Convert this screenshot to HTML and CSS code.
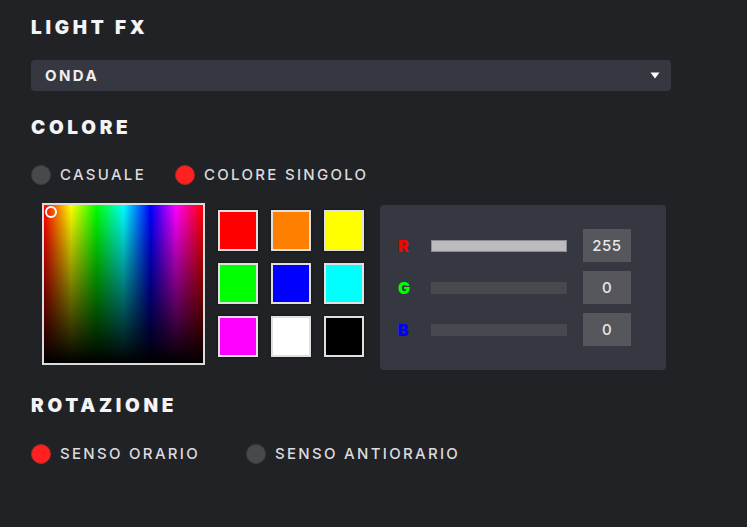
FILE: index.html
```html
<!DOCTYPE html>
<html lang="it">
<head>
<meta charset="utf-8">
<link rel="stylesheet" href="styles.css">
</head>
<body>
<div class="panel">
  <h2 class="title t1">LIGHT FX</h2>
  <div class="select">
    <span>ONDA</span>
    <svg class="caret" width="10" height="7" viewBox="0 0 10 7"><path d="M0.5 0.5 H9.5 L5 6.5 Z" fill="#fff"/></svg>
  </div>

  <h2 class="title t2">COLORE</h2>
  <div class="radios r1">
    <label class="radio"><span class="dot"></span>CASUALE</label>
    <label class="radio"><span class="dot on"></span>COLORE SINGOLO</label>
  </div>

  <div class="picker-row">
    <div class="spectrum">
      <div class="shade"></div>
      <span class="marker"></span>
    </div>
    <div class="swatches">
      <span class="sw" style="background:#ff0000"></span>
      <span class="sw" style="background:#ff8000"></span>
      <span class="sw" style="background:#ffff00"></span>
      <span class="sw" style="background:#00ff00"></span>
      <span class="sw" style="background:#0000ff"></span>
      <span class="sw" style="background:#00ffff"></span>
      <span class="sw" style="background:#ff00ff"></span>
      <span class="sw" style="background:#ffffff"></span>
      <span class="sw" style="background:#000000"></span>
    </div>
    <div class="rgb">
      <div class="rgb-row">
        <span class="ch red">R</span>
        <span class="track full"></span>
        <span class="val">255</span>
      </div>
      <div class="rgb-row">
        <span class="ch green">G</span>
        <span class="track"></span>
        <span class="val">0</span>
      </div>
      <div class="rgb-row">
        <span class="ch blue">B</span>
        <span class="track"></span>
        <span class="val">0</span>
      </div>
    </div>
  </div>

  <h2 class="title t3">ROTAZIONE</h2>
  <div class="radios r2">
    <label class="radio"><span class="dot on"></span>SENSO ORARIO</label>
    <label class="radio"><span class="dot"></span>SENSO ANTIORARIO</label>
  </div>
</div>
</body>
</html>
```

FILE: styles.css
```css
html, body {
  margin: 0;
  padding: 0;
  background: #212226;
  width: 747px;
  height: 527px;
  overflow: hidden;
}
.panel {
  padding: 16px 0 0 31px;
  font-family: Inter, "Open Sans", sans-serif;
  color: #e4e4e6;
}
.title {
  margin: 0;
  font-family: Inter, "DejaVu Sans", sans-serif;
  font-weight: 900;
  font-size: 19px;
  letter-spacing: 3.7px;
  color: #f4f4f5;
  line-height: 23px;
}
.select {
  margin-top: 21px;
  width: 640px;
  height: 31px;
  box-sizing: border-box;
  background: #353841;
  border-radius: 4px;
  display: flex;
  align-items: center;
  justify-content: space-between;
  padding: 0 11px 0 14px;
  font-family: Inter, sans-serif;
  font-weight: 700;
  font-size: 15px;
  letter-spacing: 2.4px;
  color: #f0f0f0;
}
.caret { display: block; }
.t2 { margin-top: 25px; }
.radios {
  display: flex;
  align-items: center;
  gap: 29px;
  margin-top: 26px;
}
.radio {
  display: flex;
  align-items: center;
  gap: 9px;
  font-family: Inter, sans-serif;
  font-weight: 500;
  font-size: 15px;
  letter-spacing: 2.3px;
  color: #dcdcde;
  line-height: 20px;
}
.dot {
  width: 20px;
  height: 20px;
  box-sizing: border-box;
  border-radius: 50%;
  background: #48494d;
  border: 1px solid #3c3d41;
}
.dot.on {
  background: #ff2020;
  border-color: #a52a2a;
}
.r2 { gap: 46px; margin-top: 27px; }
.picker-row {
  display: flex;
  align-items: flex-start;
  margin-top: 18px;
  margin-left: 11px;
}
.spectrum {
  position: relative;
  width: 163px;
  height: 162px;
  box-sizing: border-box;
  border: 2px solid #dcdcdc;
  background: linear-gradient(to right, #ff0000 0%, #ffff00 17%, #00ff00 33%, #00ffff 50%, #0000ff 67%, #ff00ff 83%, #ff0000 100%);
}
.shade {
  position: absolute;
  inset: 0;
  background: linear-gradient(to bottom, rgba(0,0,0,0) 0%, rgba(0,0,0,1) 100%);
}
.marker {
  position: absolute;
  left: 1px;
  top: 1px;
  width: 12px;
  height: 12px;
  box-sizing: border-box;
  border: 2px solid #fff;
  border-radius: 50%;
}
.swatches {
  display: grid;
  grid-template-columns: repeat(3, 40px);
  grid-auto-rows: 41px;
  column-gap: 13px;
  row-gap: 12px;
  margin-left: 13px;
  margin-top: 7px;
}
.sw {
  box-sizing: border-box;
  border: 2px solid #e0e0e0;
  box-shadow: 0 0 2px rgba(0,0,0,0.6);
}
.rgb {
  margin-left: 16px;
  margin-top: 2px;
  width: 286px;
  height: 165px;
  box-sizing: border-box;
  background: #353841;
  border-radius: 4px;
  padding: 24px 0 0 18px;
  display: flex;
  flex-direction: column;
  gap: 9px;
}
.rgb-row {
  display: flex;
  align-items: center;
  height: 33px;
}
.ch {
  width: 33px;
  font-family: Inter, sans-serif;
  font-weight: 900;
  font-size: 16px;
}
.red { color: #ff0000; }
.green { color: #00ff00; }
.blue { color: #0000ff; }
.track {
  width: 136px;
  height: 12px;
  box-sizing: border-box;
  background: #48494e;
}
.track.full {
  background: #bcbcbe;
  border: 1px solid #8c8c90;
}
.val {
  margin-left: 16px;
  width: 48px;
  height: 33px;
  background: #56575c;
  display: flex;
  align-items: center;
  justify-content: center;
  font-family: Inter, sans-serif;
  font-weight: 500;
  font-size: 15px;
  letter-spacing: 0.5px;
  color: #e8e8e8;
}
.t3 { margin-top: 24px; }
```
